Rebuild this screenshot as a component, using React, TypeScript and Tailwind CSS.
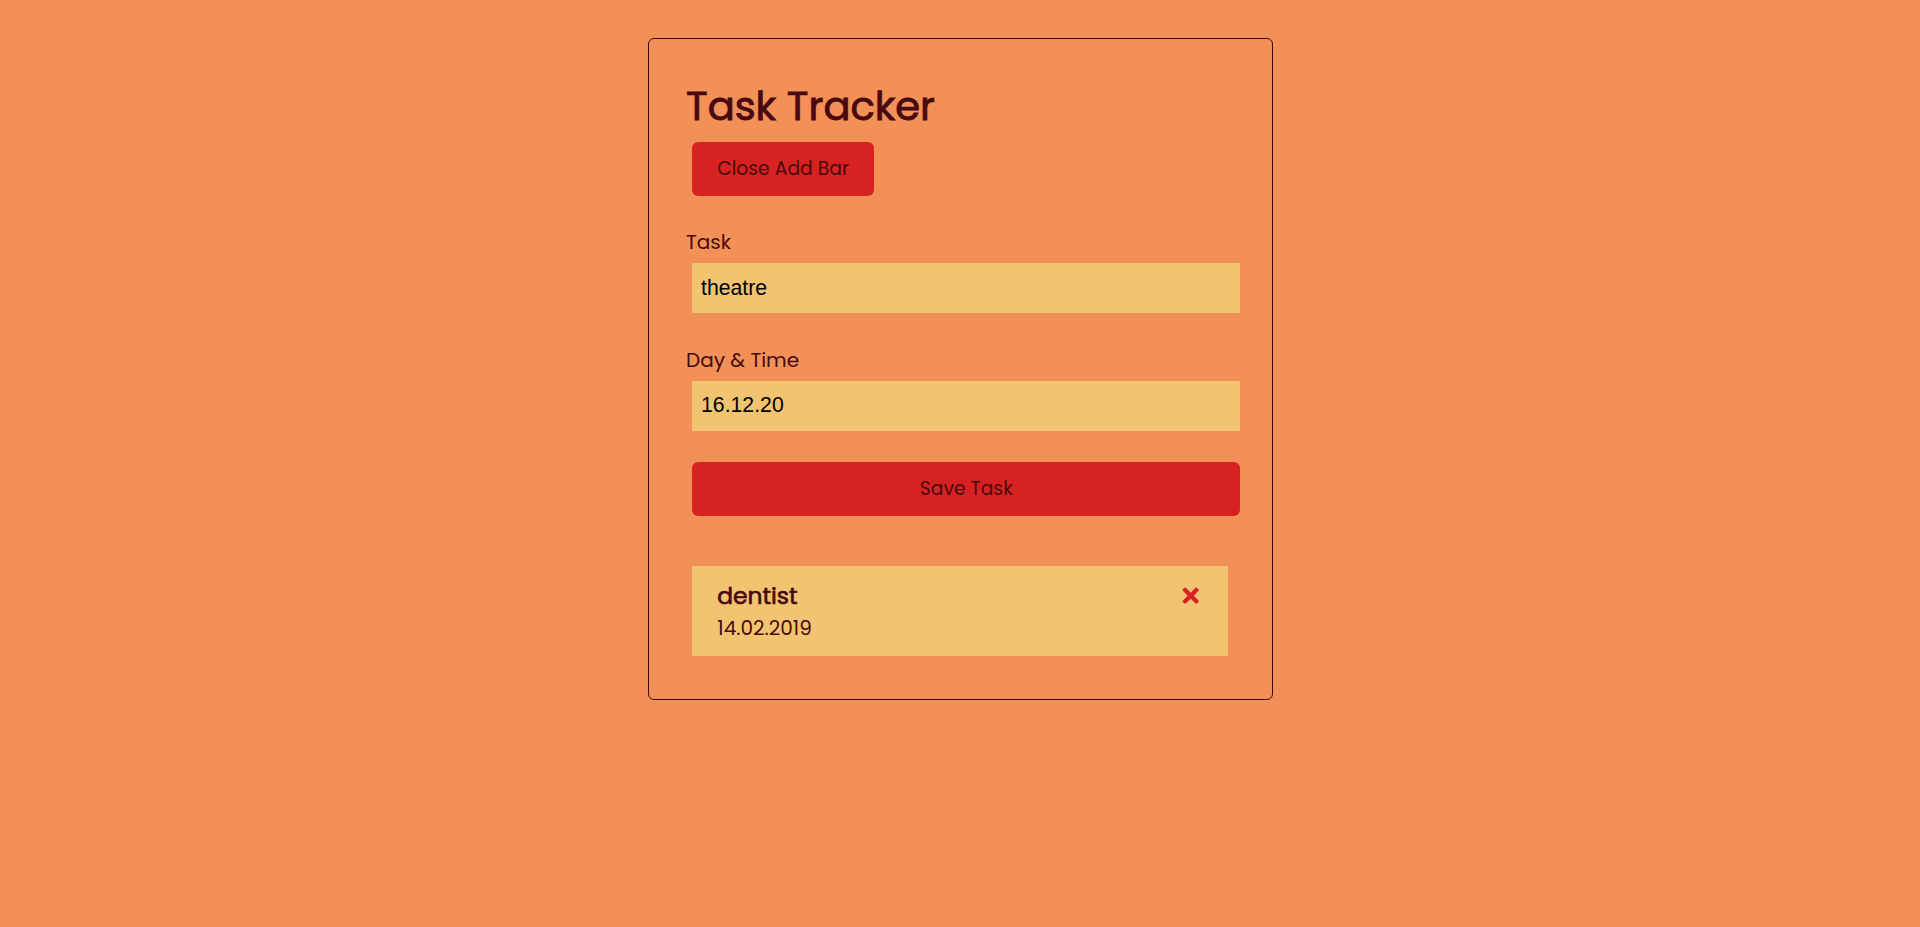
import { FaTimes } from "react-icons/fa"

interface Task {
  id: number
  text: string
  day: string
}

const tasks: Task[] = [{ id: 1, text: "dentist", day: "14.02.2019" }]

function TaskItem({ task }: { task: Task }) {
  return (
    <div className="m-[6.25px] bg-[#f2c471] px-[25px] py-[12.5px]">
      <h3 className="flex items-center justify-between text-[23.4px] leading-[35px] font-normal [-webkit-text-stroke:0.7px_currentColor]">
        {task.text}
        <FaTimes className="text-[#d82222] [-webkit-text-stroke:0]" />
      </h3>
      <p className="text-[20px] leading-[30px]">{task.day}</p>
    </div>
  )
}

export default function App() {
  return (
    <div className="min-h-screen bg-[#f29058] pt-[37.5px] font-['Poppins','Inter',sans-serif] text-[#480a0f]">
      <div className="mx-auto w-[625px] rounded-[6px] border border-[#3a0a0c] p-[37.5px]">
        <h1 className="text-[40px] leading-[60px] font-normal [-webkit-text-stroke:0.9px_currentColor]">Task Tracker</h1>
        <div className="flex">
          <button className="m-[6.25px] rounded-[6.25px] bg-[#d82222] px-[25px] py-[12.5px] text-[18.75px] leading-[28.5px]">
            Close Add Bar
          </button>
        </div>

        <form className="mb-[50px]">
          <div className="my-[25px] flex flex-col">
            <label className="text-[20px] leading-[30px]">Task</label>
            <input
              type="text"
              defaultValue="theatre"
              className="m-[6.25px] h-[50px] w-full bg-[#f2c471] px-[8.75px] py-[3.75px] font-['Liberation_Sans',Arial,sans-serif] text-[21.25px] text-black outline-none"
            />
          </div>
          <div className="my-[25px] flex flex-col">
            <label className="text-[20px] leading-[30px]">Day &amp; Time</label>
            <input
              type="text"
              defaultValue="16.12.20"
              className="m-[6.25px] h-[50px] w-full bg-[#f2c471] px-[8.75px] py-[3.75px] font-['Liberation_Sans',Arial,sans-serif] text-[21.25px] text-black outline-none"
            />
          </div>
          <button
            type="button"
            className="mx-[6.25px] my-[6.25px] block w-full rounded-[6.25px] bg-[#d82222] px-[25px] py-[12.5px] text-[18.75px] leading-[28.5px]"
          >
            Save Task
          </button>
        </form>

        {tasks.map((task) => (
          <TaskItem key={task.id} task={task} />
        ))}
      </div>
    </div>
  )
}
